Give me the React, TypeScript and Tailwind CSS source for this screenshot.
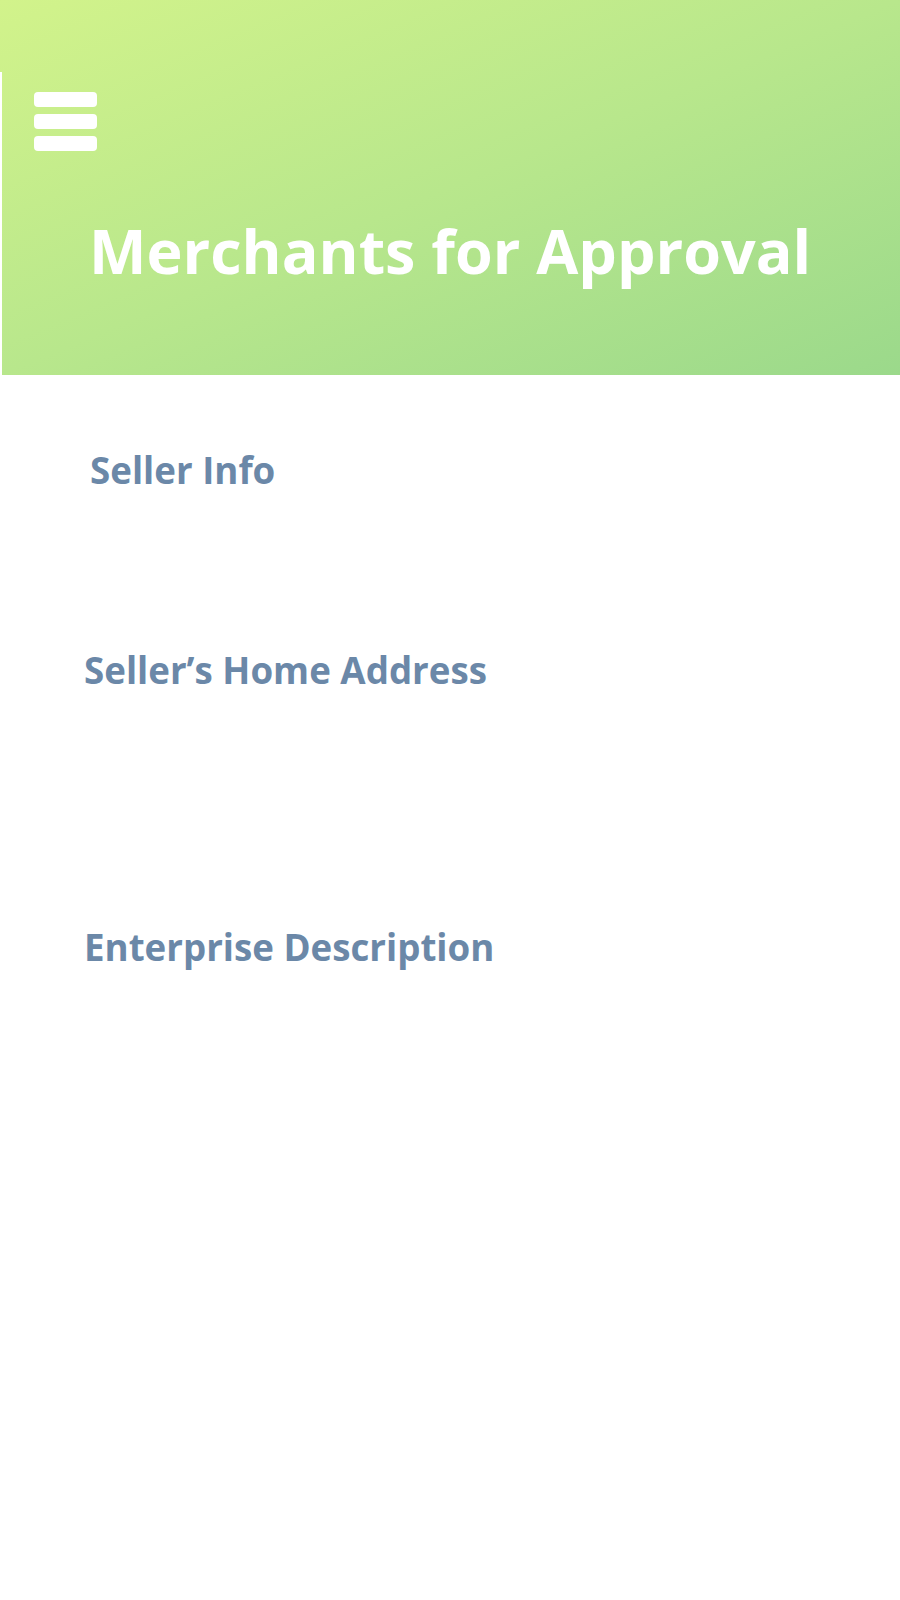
import React from 'react';

const sections = [
  { label: 'Seller Info', indent: 'pl-[90px]', gap: 'mt-[77px]' },
  { label: 'Seller’s Home Address', indent: 'pl-[84px]', gap: 'mt-[163px]' },
  { label: 'Enterprise Description', indent: 'pl-[84px]', gap: 'mt-[241px]' },
];

const App: React.FC = () => {
  return (
    <div className="w-[900px] min-h-[1600px] bg-white" style={{ fontFamily: '"Open Sans", sans-serif' }}>
      <header className="h-[375px] bg-gradient-to-br from-[#d2f38b] via-[#b8e78c] to-[#9bd98b] flex flex-col">
        <div className="h-[72px]" />
        <div className="flex-1 border-l-2 border-white flex flex-col">
          <button className="ml-[32px] mt-[20px] w-[63px] flex flex-col gap-[7px]">
            <span className="block h-[15px] rounded-[4px] bg-white" />
            <span className="block h-[15px] rounded-[4px] bg-white" />
            <span className="block h-[15px] rounded-[4px] bg-white" />
          </button>
          <h1 className="ml-[87px] mt-[69px] text-[61px] leading-none font-bold text-white">
            Merchants for Approval
          </h1>
        </div>
      </header>

      <main className="flex flex-col">
        {sections.map((s) => (
          <section key={s.label} className={`${s.gap} ${s.indent}`}>
            <h2 className="text-[36.7px] leading-none font-bold text-[#6b88a8]">{s.label}</h2>
          </section>
        ))}
      </main>
    </div>
  );
};

export default App;
